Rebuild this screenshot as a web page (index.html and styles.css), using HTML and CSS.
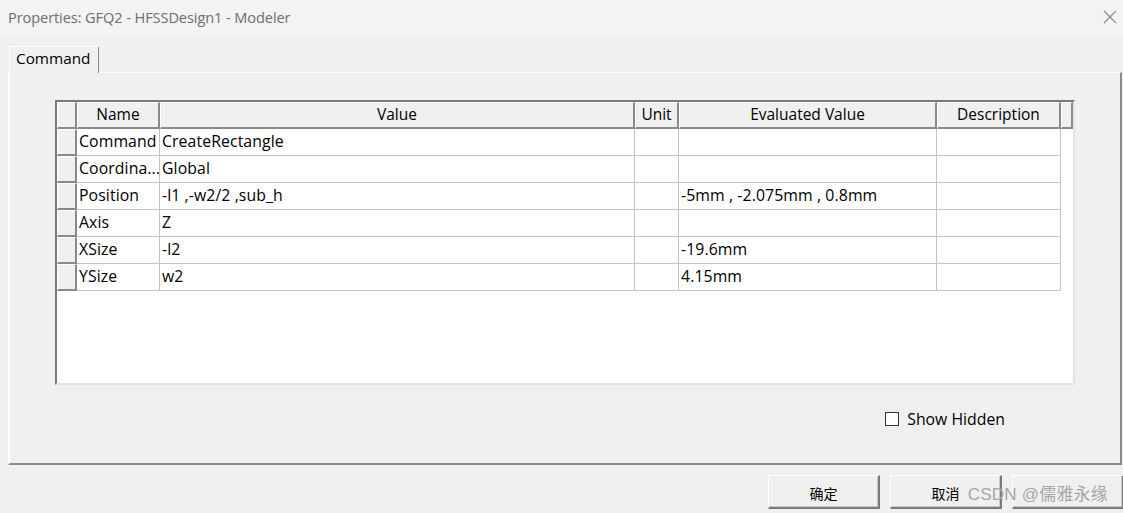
FILE: index.html
```html
<!DOCTYPE html>
<html>
<head>
<meta charset="utf-8">
<link rel="stylesheet" href="styles.css">
</head>
<body>
<div class="window">
  <div class="titlebar">
    <span class="title">Properties: GFQ2 - HFSSDesign1 - Modeler</span>
    <svg class="close" width="14" height="14" viewBox="0 0 14 14"><path d="M1 1 L13 13 M13 1 L1 13" stroke="#8a8a8a" stroke-width="1.2" fill="none"/></svg>
  </div>
  <div class="main">
    <div class="tabs"><div class="tab">Command</div></div>
    <div class="panel">
      <div class="grid">
        <div class="row head">
          <div class="rh"></div>
          <div class="hc">Name</div>
          <div class="hc">Value</div>
          <div class="hc">Unit</div>
          <div class="hc">Evaluated Value</div>
          <div class="hc">Description</div>
          <div class="hc"></div>
        </div>
        <div class="row">
          <div class="rh"></div><div class="c">Command</div><div class="c">CreateRectangle</div><div class="c"></div><div class="c"></div><div class="c"></div>
        </div>
        <div class="row">
          <div class="rh"></div><div class="c">Coordina...</div><div class="c">Global</div><div class="c"></div><div class="c"></div><div class="c"></div>
        </div>
        <div class="row">
          <div class="rh"></div><div class="c">Position</div><div class="c">-l1 ,-w2/2 ,sub_h</div><div class="c"></div><div class="c">-5mm , -2.075mm , 0.8mm</div><div class="c"></div>
        </div>
        <div class="row">
          <div class="rh"></div><div class="c">Axis</div><div class="c">Z</div><div class="c"></div><div class="c"></div><div class="c"></div>
        </div>
        <div class="row">
          <div class="rh"></div><div class="c">XSize</div><div class="c">-l2</div><div class="c"></div><div class="c">-19.6mm</div><div class="c"></div>
        </div>
        <div class="row">
          <div class="rh"></div><div class="c">YSize</div><div class="c">w2</div><div class="c"></div><div class="c">4.15mm</div><div class="c"></div>
        </div>
      </div>
      <div class="options">
        <label class="check"><span class="box"></span>Show Hidden</label>
      </div>
    </div>
    <div class="buttons">
      <div class="btn">确定</div>
      <div class="btn">取消</div>
      <div class="btn"></div>
      <div class="watermark">CSDN @儒雅永缘</div>
    </div>
  </div>
</div>
</body>
</html>
```

FILE: styles.css
```css
* { box-sizing: border-box; }
html, body { margin: 0; padding: 0; }
body {
  width: 1123px;
  height: 513px;
  overflow: hidden;
  background: #f0f0f0;
  font-family: "Open Sans", "Noto Sans", "Noto Sans CJK SC", sans-serif;
  font-size: 15px;
  color: #000;
}
.window { display: flex; flex-direction: column; height: 513px; }
.titlebar {
  height: 35px;
  background: #f3f3f3;
  display: flex;
  align-items: center;
  justify-content: space-between;
  padding: 0 6px 2px 8px;
}
.title { color: #6e6e6e; font-size: 14.6px; letter-spacing: -0.1px; }
.close { margin-top: 1px; }
.main { position: relative; flex: 1; display: flex; flex-direction: column; }
.tabs { height: 37px; display: flex; align-items: flex-end; padding-left: 9px; }
.tab {
  position: relative;
  z-index: 1;
  margin-bottom: -1px;
  height: 27px;
  width: 90px;
  background: #f0f0f0;
  border-top: 1px solid #fff;
  border-left: 1px solid #fff;
  border-right: 1px solid #8a8a8a;
  border-top-right-radius: 2px;
  padding: 1px 0 0 6px;
  font-size: 15.3px;
  line-height: 21px;
}
.panel {
  margin: 0 1px 0 8px;
  height: 393px;
  border-top: 1px solid #fff;
  border-left: 2px solid #fff;
  border-right: 2px solid #8a8a8a;
  border-bottom: 2px solid #8a8a8a;
  padding: 27px 0 0 45px;
}
.grid {
  width: 1020px;
  height: 285px;
  background: #fff;
  border-top: 2px solid #7a7a7a;
  border-left: 2px solid #7a7a7a;
  border-right: 2px solid #e3e3e3;
  border-bottom: 2px solid #e3e3e3;
}
.row {
  display: grid;
  grid-template-columns: 20px 83px 475px 44px 258px 124px 12px;
  height: 27px;
}
.rh {
  background: #f0f0f0;
  border-top: 1px solid #fff;
  border-left: 1px solid #fff;
  border-right: 2px solid #8a8a8a;
  border-bottom: 2px solid #8a8a8a;
}
.hc {
  background: #f0f0f0;
  border-top: 1px solid #fff;
  border-left: 1px solid #fff;
  border-right: 2px solid #8a8a8a;
  border-bottom: 2px solid #8a8a8a;
  text-align: center;
  line-height: 23px;
  font-size: 15.5px;
  white-space: nowrap;
  overflow: hidden;
}
.c {
  border-right: 1px solid #c4c4c4;
  border-bottom: 1px solid #c4c4c4;
  padding-left: 2px;
  line-height: 25px;
  font-size: 15.8px;
  letter-spacing: 0.1px;
  white-space: nowrap;
  overflow: hidden;
}
.options {
  display: flex;
  justify-content: flex-end;
  padding: 24px 115px 0 0;
}
.check { display: flex; align-items: center; font-size: 15.8px; line-height: 20px; }
.box {
  width: 14px;
  height: 14px;
  background: #fff;
  border: 1px solid #333;
  margin-right: 8px;
}
.buttons {
  display: flex;
  justify-content: flex-end;
  gap: 10px;
  padding-top: 10px;
  margin-right: -1px;
}
.btn {
  width: 112px;
  height: 34px;
  background: #f0f0f0;
  border-top: 1px solid #fff;
  border-left: 1px solid #fff;
  border-right: 2px solid #7a7a7a;
  border-bottom: 2px solid #7a7a7a;
  box-shadow: inset -1px -1px 0 #c8c8c8;
  display: flex;
  align-items: center;
  justify-content: center;
  font-family: "Noto Sans CJK SC", sans-serif;
  font-size: 14px;
  padding-top: 2px;
}
.watermark {
  position: absolute;
  right: 15px;
  bottom: 8px;
  font-family: "Liberation Sans", "Noto Sans CJK SC", sans-serif;
  font-size: 17px;
  color: #a6a6a6;
  letter-spacing: 0.2px;
  pointer-events: none;
}
```
